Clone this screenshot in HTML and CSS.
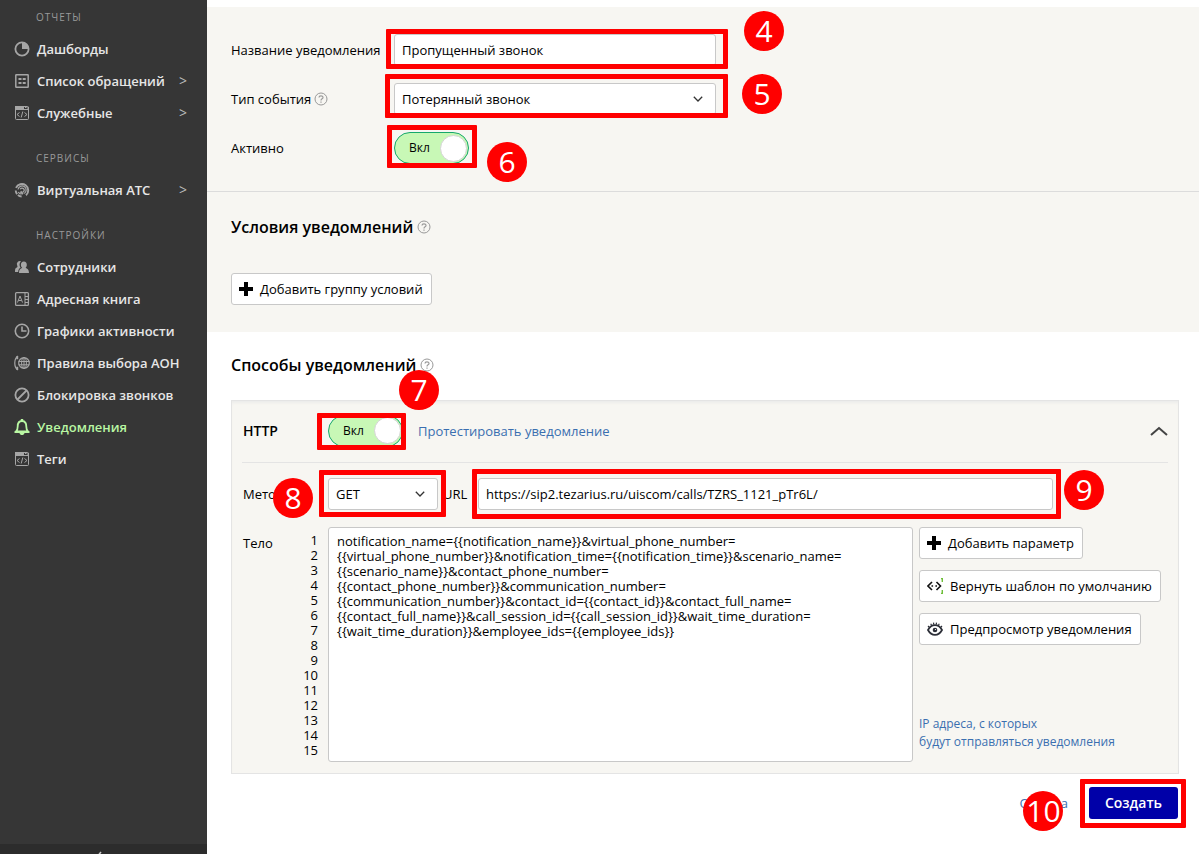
FILE: index.html
```html
<!DOCTYPE html>
<html lang="ru">
<head>
<meta charset="utf-8">
<meta name="viewport" content="width=device-width, initial-scale=1">
<title>Уведомления</title>
<link rel="stylesheet" href="styles.css">
</head>
<body>
<svg class="sprite" aria-hidden="true">
  <symbol id="i-window" viewBox="0 0 16 16"><rect x="1.500" y="1.500" width="13" height="13" rx="1" fill="none" stroke="currentColor"/><path d="M1 1h9v3H1zM11 2h1.500v1H11zM13.500 2H15v2h-1.500zM1 4h14v1H1z" fill="currentColor"/><path d="M5.500 7.500 3 9.500l2.500 2M10.500 7.500l2.500 2-2.500 2M8.800 6.500l-1.600 6" fill="none" stroke="currentColor"/></symbol>
  <symbol id="i-help" viewBox="0 0 14 14"><circle cx="7" cy="7" r="6" fill="none" stroke="currentColor"/><path d="M5 5.600C5 3.300 9 3.300 9 5.500 9 6.900 7 6.800 7 8.500" fill="none" stroke="currentColor" stroke-width="1.200"/><path d="M6.400 9.500h1.200v1.200H6.400z" fill="currentColor"/></symbol>
  <symbol id="i-plus" viewBox="0 0 14 14"><path d="M5 0h4v5h5v4H9v5H5V9H0V5h5z" fill="currentColor"/></symbol>
  <symbol id="i-down" viewBox="0 0 10 6"><path d="M.8.800 5 5 9.200.800" fill="none" stroke="currentColor" stroke-width="1.300"/></symbol>
</svg>
<div class="app">
  <aside class="sidebar">
    <nav class="nav">
      <h2 class="nav-title">Отчеты</h2>
      <a class="nav-item" href="#"><svg class="nav-icon" viewBox="0 0 16 16"><circle cx="8" cy="8" r="6.600" fill="none" stroke="currentColor" stroke-width="1.800"/><path d="M8 1.500V8h6.500A6.500 6.500 0 0 0 8 1.500z" fill="currentColor"/></svg>Дашборды</a>
      <a class="nav-item" href="#"><svg class="nav-icon" viewBox="0 0 16 16"><rect x="1.800" y="1.800" width="12.400" height="12.400" rx=".5" fill="none" stroke="currentColor" stroke-width="1.500"/><path d="M4.500 5h3v2h-3zM8.700 5h3v2h-3zM4.500 9h3v2h-3zM8.700 9h3v2h-3z" fill="currentColor"/></svg>Список обращений<span class="nav-more">&gt;</span></a>
      <a class="nav-item" href="#"><svg class="nav-icon"><use href="#i-window"/></svg>Служебные<span class="nav-more">&gt;</span></a>
      <h2 class="nav-title">Сервисы</h2>
      <a class="nav-item" href="#"><svg class="nav-icon" viewBox="0 0 16 16" fill="none" stroke="currentColor"><path d="M2 5.800A6.400 6.400 0 1 1 12 13.300" stroke-width="1.900"/><path d="M1.700 8.500a6.400 6.400 0 0 0 6 6" stroke-width="1.900" stroke-dasharray="4 1"/><path d="M4 7.500a4.100 4.100 0 1 1 6.300 4M4.300 10a4 4 0 0 0 3.200 2.200" stroke-width="1.200"/><path d="M6.200 7.300a2.100 2.100 0 1 1 2.300 2.900" stroke-width="1.300"/><path d="M6.500 9.500 9 12" stroke-width="1.800"/></svg>Виртуальная АТС<span class="nav-more">&gt;</span></a>
      <h2 class="nav-title">Настройки</h2>
      <a class="nav-item" href="#"><svg class="nav-icon" viewBox="0 0 16 16" fill="currentColor"><path d="M7 2.200a3 3 0 0 0-3.800 4.200c.5 1 .3 1.600-.4 2C1.500 9 1 9.500 1 13h3.200c.2-2.500.9-3.600 2.400-4.200C5 6.500 5.300 4 7 2.200z"/><path d="M9.800 2.500c2 0 3 1.500 3 3.200 0 1.300-.5 2.300-1.200 3 .5.800 3.400.600 3.400 5.300H5c0-4.700 2.700-4.500 3.200-5.300C7.300 8 6.900 7 6.900 5.700c0-1.700 1-3.200 2.900-3.200z"/></svg>Сотрудники</a>
      <a class="nav-item" href="#"><svg class="nav-icon" viewBox="0 0 16 16" fill="none" stroke="currentColor"><rect x="1.600" y="1.600" width="12.800" height="12.800" rx="1" stroke-width="1.300"/><path d="M11 2v12M11 5.500h4M11 8.500h4M11 11.500h4M3.500 11.500 6 5l2.500 6.500M4.500 9.500h3"/></svg>Адресная книга</a>
      <a class="nav-item" href="#"><svg class="nav-icon" viewBox="0 0 16 16" fill="none" stroke="currentColor" stroke-width="1.600"><circle cx="8" cy="8" r="6.700"/><path d="M8 3.500V8h4.500"/></svg>Графики активности</a>
      <a class="nav-item" href="#"><svg class="nav-icon" viewBox="0 0 16 16" fill="none" stroke="currentColor"><path d="M4 1C-.3 3.500-.3 12.500 4 15" stroke-width="1.200"/><path d="M3.200 1.200v3M3.200 11.800v3" stroke-width="2"/><circle cx="10" cy="8" r="5.300" stroke-width="1.200"/><ellipse cx="10" cy="8" rx="2.400" ry="5.300"/><path d="M4.500 6.500h11M4.500 9.800h11M10 2.500v11"/></svg>Правила выбора АОН</a>
      <a class="nav-item" href="#"><svg class="nav-icon" viewBox="0 0 16 16" fill="none" stroke="currentColor" stroke-width="1.800"><circle cx="8" cy="8" r="6.600"/><path d="M3.500 12.500l9-9"/></svg>Блокировка звонков</a>
      <a class="nav-item nav-item-active" href="#" aria-current="page"><svg class="nav-icon" viewBox="0 0 16 16"><path d="M8 2C4.500 2 3.700 4.500 3.700 7.500 3.700 10 3.200 11.500 2 12.500h12c-1.200-1-1.700-2.500-1.700-5C12.300 4.500 11.500 2 8 2z" fill="none" stroke="currentColor" stroke-width="1.800"/><path d="M6.800 0h2.400v2H6.800zM1 12h14v2h-4.500c-.5 2.800-4.500 2.800-5 0H1z" fill="currentColor"/></svg>Уведомления</a>
      <a class="nav-item" href="#"><svg class="nav-icon"><use href="#i-window"/></svg>Теги</a>
    </nav>
    <button class="collapse" type="button" aria-label="Свернуть меню"><svg class="collapse-icon" viewBox="0 0 8 14"><path d="M6 1 1 7l5 6" fill="none" stroke="currentColor" stroke-width="1.500"/></svg></button>
  </aside>

  <main class="main">
    <form class="form">
      <section class="section section-fields">
        <div class="row">
          <label class="row-label" for="name">Название уведомления</label>
          <div class="mark mark-name field-wide">
            <input class="field" id="name" type="text" value="Пропущенный звонок">
            <span class="frame"></span><span class="step">4</span>
          </div>
        </div>
        <div class="row">
          <label class="row-label" for="event">Тип события <svg class="help"><use href="#i-help"/></svg></label>
          <div class="mark mark-event field-wide">
            <select class="field" id="event"><option>Потерянный звонок</option></select>
            <svg class="arrow"><use href="#i-down"/></svg>
            <span class="frame"></span><span class="step">5</span>
          </div>
        </div>
        <div class="row">
          <label class="row-label" for="active">Активно</label>
          <div class="mark mark-active">
            <label class="toggle"><input class="toggle-input" id="active" type="checkbox" role="switch" checked>Вкл<span class="knob"></span></label>
            <span class="frame"></span><span class="step">6</span>
          </div>
        </div>
      </section>

      <section class="section section-rules">
        <h1 class="heading">Условия уведомлений <svg class="help"><use href="#i-help"/></svg></h1>
        <button class="button" type="button"><svg class="button-icon"><use href="#i-plus"/></svg>Добавить группу условий</button>
      </section>

      <section class="section-methods">
        <h1 class="heading">Способы уведомлений <svg class="help"><use href="#i-help"/></svg></h1>
        <div class="panel">
          <div class="panel-head">
            <label class="panel-title" for="http">HTTP</label>
            <div class="mark mark-http">
              <label class="toggle"><input class="toggle-input" id="http" type="checkbox" role="switch" checked>Вкл<span class="knob"></span></label>
              <span class="frame"></span><span class="step">7</span>
            </div>
            <a class="link" href="#">Протестировать уведомление</a>
            <button class="fold" type="button" aria-label="Свернуть"><svg class="fold-icon" viewBox="0 0 18 10"><path d="M1 9l8-7 8 7" fill="none" stroke="currentColor" stroke-width="2"/></svg></button>
          </div>
          <div class="request">
            <label class="request-label" for="method">Метод</label>
            <div class="mark mark-method">
              <select class="field" id="method"><option>GET</option></select>
              <svg class="arrow"><use href="#i-down"/></svg>
              <span class="frame"></span><span class="step">8</span>
            </div>
            <label class="url-label" for="url">URL</label>
            <div class="mark mark-url">
              <input class="field" id="url" type="text" value="https://sip2.tezarius.ru/uiscom/calls/TZRS_1121_pTr6L/">
              <span class="frame"></span><span class="step">9</span>
            </div>
          </div>
          <div class="body-row">
            <label class="body-label" for="body">Тело</label>
            <ol class="lines" aria-hidden="true"><li>1</li><li>2</li><li>3</li><li>4</li><li>5</li><li>6</li><li>7</li><li>8</li><li>9</li><li>10</li><li>11</li><li>12</li><li>13</li><li>14</li><li>15</li></ol>
            <textarea class="editor" id="body" rows="15" spellcheck="false">notification_name={{notification_name}}&amp;virtual_phone_number=
{{virtual_phone_number}}&amp;notification_time={{notification_time}}&amp;scenario_name=
{{scenario_name}}&amp;contact_phone_number=
{{contact_phone_number}}&amp;communication_number=
{{communication_number}}&amp;contact_id={{contact_id}}&amp;contact_full_name=
{{contact_full_name}}&amp;call_session_id={{call_session_id}}&amp;wait_time_duration=
{{wait_time_duration}}&amp;employee_ids={{employee_ids}}</textarea>
            <div class="tools">
              <button class="button" type="button"><svg class="button-icon"><use href="#i-plus"/></svg>Добавить параметр</button>
              <button class="button" type="button"><svg class="button-icon button-icon-wide" viewBox="0 0 16 16" fill="none"><path d="M5 4 1 8l4 4M9.500 4l4 4-4 4" stroke="#111" stroke-width="1.600"/><path d="M4.500 7.200h1.600v1.600H4.500zM8.400 7.200H10v1.600H8.400z" fill="#111"/><path d="M14 .5h1.300V4M15.300 12v3.500H14" stroke="#6fbf3a" stroke-width="1.400"/></svg>Вернуть шаблон по умолчанию</button>
              <button class="button" type="button"><svg class="button-icon button-icon-wide" viewBox="0 0 16 16" fill="none" stroke="#2c2f38"><path d="M1 9c3.500-6.500 10.500-6.500 14 0-3.500 6.500-10.500 6.500-14 0z" stroke-width="1.800"/><circle cx="8" cy="9" r="2.300" fill="#2c2f38" stroke="none"/><circle cx="8.500" cy="8.500" r=".6" fill="#fff" stroke="none"/><path d="M1 5l1.500 1.500M3.700 2.800l1 1.700M6.500 1.700l.3 2M9.500 1.700l-.3 2M12.300 2.800l-1 1.700M15 5l-1.500 1.500" stroke-width="1.200"/></svg>Предпросмотр уведомления</button>
              <a class="link link-ip" href="#">IP адреса, с которых<br>будут отправляться уведомления</a>
            </div>
          </div>
        </div>
        <div class="actions">
          <div class="mark mark-cancel"><a class="link" href="#">Отмена</a><span class="step">10</span></div>
          <div class="mark mark-submit"><button class="submit" type="submit">Создать</button><span class="frame"></span></div>
        </div>
      </section>
    </form>
  </main>
</div>
</body>
</html>
```
FILE: styles.css
```css
* { box-sizing: border-box; }

body {
  margin: 0;
  background: #fff;
  color: #000;
  font: 13px/18px "Open Sans", "Noto Sans", sans-serif;
}

button, input, select, textarea { font: inherit; color: inherit; }
button { cursor: pointer; }
a { text-decoration: none; }
svg { display: block; flex: none; }
.sprite { position: absolute; width: 0; height: 0; }

.app { display: flex; min-height: 100vh; }

/* Sidebar */
.sidebar {
  display: flex;
  flex: none;
  flex-direction: column;
  width: 207px;
  background: #363636;
}
.nav { flex: 1; padding-top: 1px; }
.nav-title {
  margin: 13px 0 0 36px;
  color: #999;
  font-size: 10px;
  font-weight: 400;
  line-height: 32px;
  letter-spacing: 1px;
  text-transform: uppercase;
}
.nav-title:first-child { margin-top: 0; }
.nav-item {
  display: flex;
  align-items: center;
  gap: 7px;
  height: 32px;
  padding: 0 20px 0 14px;
  color: #e6e6e6;
  font-weight: 600;
}
.nav-icon { width: 16px; height: 16px; color: #a6a6a6; }
.nav-more { margin-left: auto; color: #bbb; font-size: 14px; font-weight: 400; }
.nav-item-active, .nav-item-active .nav-icon { color: #b9f7a3; }
.collapse {
  height: 10px;
  padding: 7px 10px 0 0;
  overflow: hidden;
  border: 0;
  background: #2c2c2c;
  color: #ccc;
}
.collapse-icon { width: 8px; height: 14px; margin: 0 auto; }

/* Form */
.main { flex: 1; min-width: 0; padding-top: 7px; }
.section { padding: 27px 24px; background: #f7f6f2; }
.section-fields {
  display: grid;
  gap: 17px;
  border-bottom: 1px solid #dcdcdc;
}
.section-rules { padding-top: 23px; }
.section-rules .heading { margin-bottom: 34px; }
.section-methods { padding: 21px 20px 27px 24px; }
.row { display: flex; align-items: center; }
.row-label { display: flex; align-items: center; gap: 3px; width: 163px; }
.field-wide { width: 322px; }
.help { width: 14px; height: 14px; color: #999; }
.heading {
  display: flex;
  align-items: center;
  gap: 4px;
  margin: 0;
  font-size: 16px;
  font-weight: 600;
  line-height: 24px;
}
.field {
  display: block;
  width: 100%;
  height: 32px;
  padding: 0 7px 1px;
  border: 1px solid #c8c8c8;
  border-radius: 3px;
  background: #fff;
  appearance: none;
}
.arrow {
  position: absolute;
  top: 13px;
  right: 13px;
  width: 10px;
  height: 6px;
  color: #333;
  pointer-events: none;
}
.toggle {
  display: flex;
  align-items: center;
  justify-content: space-between;
  width: 75px;
  height: 32px;
  padding: 0 1px 0 14px;
  border: 1px solid #16a86b;
  border-radius: 16px;
  background: #c8f8b6;
  font-size: 12px;
}
.toggle-input { position: absolute; inset: 0; margin: 0; opacity: 0; }
.knob {
  width: 27px;
  height: 27px;
  border: 1px solid #d4d4d4;
  border-radius: 50%;
  background: #fff;
}
.button {
  display: flex;
  align-items: center;
  gap: 7px;
  height: 32px;
  padding: 0 8px 0 7px;
  border: 1px solid #c8c8c8;
  border-radius: 3px;
  background: #fff;
  white-space: nowrap;
}
.button-icon { width: 14px; height: 14px; }
.button-icon-wide { width: 16px; height: 16px; }
.link { color: #3a6fb0; }

/* Delivery panel */
.panel {
  margin-top: 23px;
  padding: 0 10px 11px;
  border: 1px solid #e4e4e4;
  background: #f7f6f2;
  box-shadow: inset 0 3px 3px -1px #ececea;
}
.panel-head {
  display: flex;
  align-items: center;
  height: 62px;
  padding-bottom: 2px;
  border-bottom: 1px solid #e4e4e4;
}
.panel-title { width: 86px; padding-left: 1px; font-size: 14px; font-weight: 600; }
.mark-http + .link { margin-left: 15px; }
.fold {
  display: flex;
  margin-left: auto;
  padding: 0;
  border: 0;
  background: none;
  color: #444;
}
.fold-icon { width: 18px; height: 10px; }
.request { display: flex; align-items: center; padding: 15px 115px 17px 0; }
.request-label, .body-label { width: 86px; padding-left: 1px; }
.mark-method { width: 110px; }
.url-label { width: 40px; padding-left: 5px; }
.mark-url { flex: 1; }
.body-row { display: flex; }
.body-label { width: 50px; padding-top: 7px; }
.lines {
  width: 36px;
  margin: 0;
  padding: 6px 10px 0 0;
  line-height: 15px;
  list-style: none;
  text-align: right;
}
.editor {
  flex: 1;
  min-width: 0;
  height: 235px;
  padding: 6px 8px;
  border: 1px solid #c8c8c8;
  border-radius: 3px;
  background: #fff;
  line-height: 15px;
  resize: none;
}
.tools {
  display: flex;
  flex-direction: column;
  align-items: flex-start;
  gap: 11px;
  width: 255px;
  padding: 0 0 11px 6px;
}
.link-ip { margin-top: auto; font-size: 12px; }
.actions {
  display: flex;
  align-items: center;
  justify-content: flex-end;
  gap: 21px;
  margin-top: 13px;
  padding-right: 1px;
}
.submit {
  display: block;
  height: 32px;
  padding: 0 16px;
  border: 0;
  border-radius: 3px;
  background: #0000a8;
  color: #fff;
  font-size: 14px;
  font-weight: 600;
}

/* Numbered highlights over the controls */
.mark { position: relative; }
.frame {
  position: absolute;
  border: 5px solid #f00;
  border-radius: 1px;
  pointer-events: none;
}
.step {
  position: absolute;
  z-index: 1;
  width: 40px;
  height: 40px;
  border-radius: 50%;
  background: #f00;
  color: #fff;
  font-size: 30px;
  line-height: 40px;
  text-align: center;
  pointer-events: none;
}
.mark-name .frame { inset: -5px -12px -3px -8px; }
.mark-name .step { top: -23px; right: -68px; }
.mark-event .frame { inset: -9px -12px -3px -9px; }
.mark-event .step { top: -9px; right: -66px; }
.mark-active .frame { inset: -7px -8px -4px -7px; }
.mark-active .step { top: 10px; right: -58px; }
.mark-http .frame { inset: -2px -3px -3px -11px; }
.mark-http .step { top: -45px; right: -36px; }
.mark-method .frame { inset: -8px -8px -7px -9px; }
.mark-method .step { top: 0; left: -55px; }
.mark-url .frame { inset: -9px -8px -9px -6px; }
.mark-url .step { top: -8px; right: -51px; }
.mark-cancel .step { top: -3px; left: 4px; }
.mark-submit .frame { inset: -8px -8px -9px -9px; }
```
